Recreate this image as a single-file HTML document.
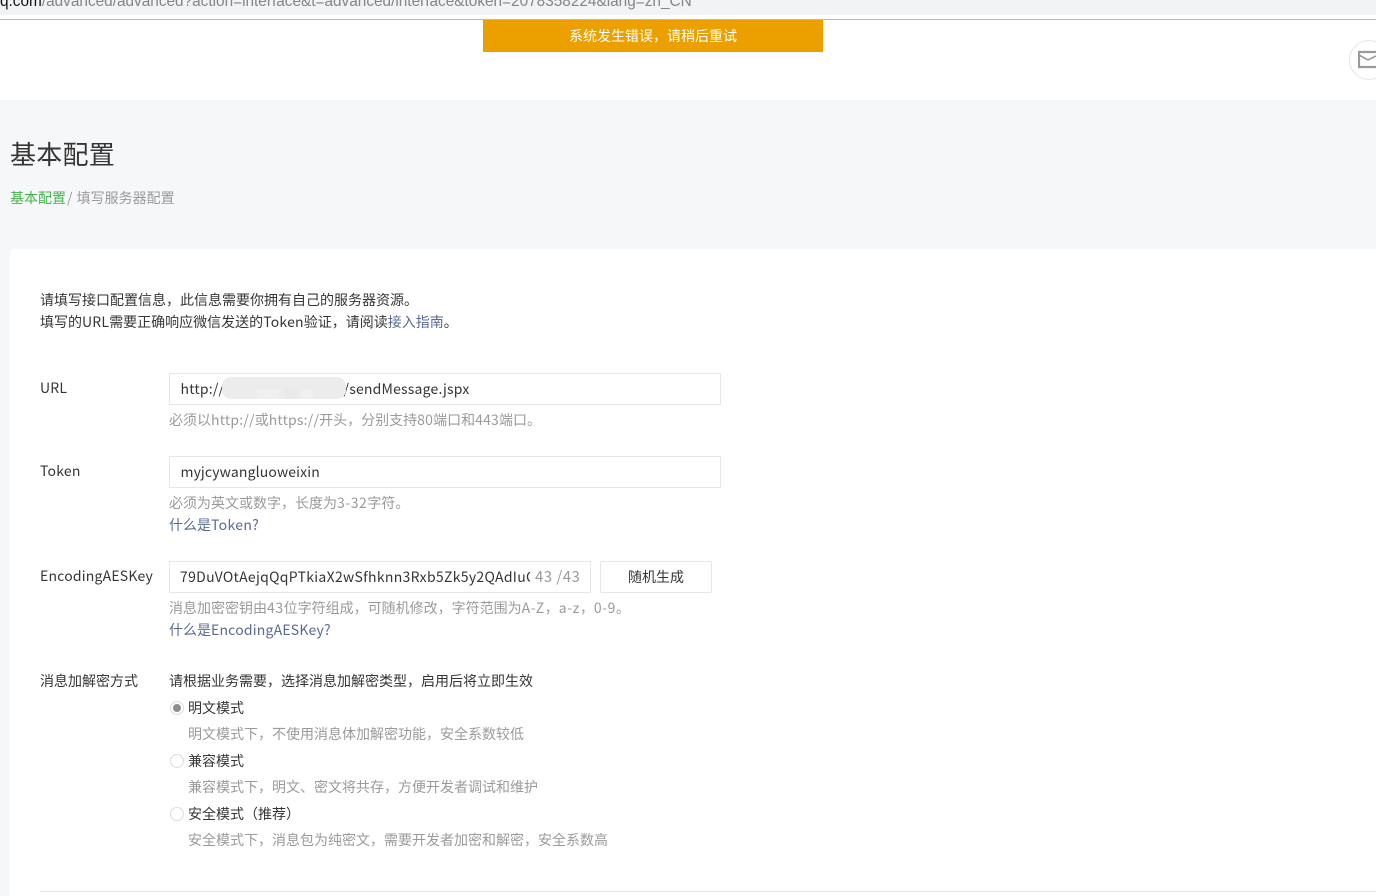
<!DOCTYPE html>
<html lang="zh-CN">
<head>
<meta charset="utf-8">
<title>基本配置</title>
<style>
html,body{margin:0;padding:0;width:1376px;height:896px;overflow:hidden;background:#f6f7f9;}
body{position:relative;font-family:"Noto Sans CJK SC","Liberation Sans",sans-serif;font-size:14px;color:#353535;}
.t{position:absolute;white-space:nowrap;line-height:22px;height:22px;}
.b{position:absolute;box-sizing:border-box;}
.g{color:#9a9a9a;}
.l{color:#576b95;}
.a{letter-spacing:.2px;}
.d{letter-spacing:.55px;}
.in{position:absolute;box-sizing:border-box;background:#fff;border:1px solid #e7e7eb;height:32px;}
.r{position:absolute;box-sizing:border-box;width:14px;height:14px;border-radius:50%;border:1px solid #dcdcdc;background:#fff;left:170px;}
</style>
</head>
<body>
<div class="b" style="left:0;top:0;width:1376px;height:15px;background:#f1f3f5;"></div>
<div class="b" style="left:0;top:15px;width:1376px;height:4px;background:#fff;"></div>
<div class="b" style="left:0;top:19px;width:1376px;height:1px;background:#b8b8b8;"></div>
<div class="t" style="left:0;top:-9px;font-size:15.37px;color:#80868c;font-family:'Liberation Sans',sans-serif;"><span style="color:#111">q.com</span>/advanced/advanced?action=interface&amp;t=advanced/interface&amp;token=2078358224&amp;lang=zh_CN</div>

<div class="b" style="left:0;top:20px;width:1376px;height:80px;background:#fff;"></div>
<div class="b" style="left:483px;top:20px;width:340px;height:32px;background:#eba000;"></div>
<div class="t" style="left:569px;top:25px;color:#fff;">系统发生错误，请稍后重试</div>

<div class="b" style="left:1349px;top:40px;width:40px;height:40px;border-radius:50%;border:1px solid #e4e6e9;background:#fff;"></div>
<svg class="b" style="left:1358px;top:50px;" width="18" height="20" viewBox="0 0 18 20"><path d="M18 2H1v15h17" fill="none" stroke="#9a9a9a" stroke-width="2.2"/><path d="M1 5l9 5 8-4" fill="none" stroke="#9a9a9a" stroke-width="1.6"/></svg>

<div class="t" style="left:10px;top:135px;height:38px;line-height:38px;font-size:26px;letter-spacing:.25px;color:#353535;">基本配置</div>
<div class="t" style="left:10px;top:187px;"><span style="color:#44b549;">基本配置</span><span class="g" style="margin-left:1px;">/<span style="margin-left:1px;"> 填写服务器配置</span></span></div>

<div class="b" style="left:10px;top:249px;width:1366px;height:647px;background:#fff;border-radius:3px 0 0 0;"></div>

<div class="t" style="left:40px;top:289px;">请填写接口配置信息，此信息需要你拥有自己的服务器资源。</div>
<div class="t" style="left:40px;top:311px;">填写的<span class="a">URL</span>需要正确响应微信发送的<span class="a">Token</span>验证，请阅读<span class="l">接入指南</span>。</div>

<div class="t a" style="left:40px;top:377px;">URL</div>
<div class="in" style="left:169px;top:373px;width:552px;"></div>
<div class="t a" style="left:180.5px;top:378px;">http://</div>
<div class="t a" style="left:343.5px;top:378px;">/sendMessage.jspx</div>
<div class="b" style="left:222px;top:377px;width:124px;height:22px;border-radius:9px;background:#ececed;"></div>
<div class="b" style="left:257px;top:390px;width:22px;height:9px;background:#eff0f0;"></div>
<div class="b" style="left:285px;top:388px;width:13px;height:11px;background:#e8e9e9;"></div>
<div class="b" style="left:301px;top:390px;width:12px;height:9px;background:#eff0f0;"></div>
<div class="t g" style="left:169px;top:409px;">必须以<span class="a">http://</span>或<span class="a">https://</span>开头，分别支持<span class="a">80</span>端口和<span class="a">443</span>端口。</div>

<div class="t a" style="left:40px;top:460px;">Token</div>
<div class="in" style="left:169px;top:456px;width:552px;"></div>
<div class="t" style="left:180.5px;top:461px;letter-spacing:.14px;">myjcywangluoweixin</div>
<div class="t g" style="left:169px;top:492px;">必须为英文或数字，长度为<span class="d">3-32</span>字符。</div>
<div class="t l" style="left:169px;top:514px;">什么是<span class="a" style="letter-spacing:.33px;">Token?</span></div>

<div class="t a" style="left:40px;top:565px;">EncodingAESKey</div>
<div class="in" style="left:169px;top:561px;width:422px;"></div>
<div class="t" style="left:180px;top:566px;width:350px;overflow:hidden;letter-spacing:.3px;">79DuVOtAejqQqPTkiaX2wSfhknn3Rxb5Zk5y2QAdIuG</div>
<div class="t g" style="left:535px;top:566px;font-size:15px;letter-spacing:.45px;">43 /43</div>
<div class="b" style="left:600px;top:561px;width:112px;height:32px;border:1px solid #e7e7eb;border-radius:2px;background:#fff;"></div>
<div class="t" style="left:628px;top:566px;">随机生成</div>
<div class="t g" style="left:169px;top:597px;">消息加密密钥由<span class="d">43</span>位字符组成，可随机修改，字符范围为<span class="d">A-Z</span>，<span class="d">a-z</span>，<span class="d">0-9</span>。</div>
<div class="t l" style="left:169px;top:619px;">什么是<span class="a">EncodingAESKey?</span></div>

<div class="t" style="left:40px;top:670px;">消息加解密方式</div>
<div class="t" style="left:169px;top:670px;">请根据业务需要，选择消息加解密类型，启用后将立即生效</div>

<div class="r" style="top:701px;"></div>
<div class="b" style="left:173px;top:704px;width:8px;height:8px;border-radius:50%;background:#8d8d8d;"></div>
<div class="t" style="left:188px;top:697px;">明文模式</div>
<div class="t g" style="left:188px;top:723px;">明文模式下，不使用消息体加解密功能，安全系数较低</div>

<div class="r" style="top:754px;"></div>
<div class="t" style="left:188px;top:750px;">兼容模式</div>
<div class="t g" style="left:188px;top:776px;">兼容模式下，明文、密文将共存，方便开发者调试和维护</div>

<div class="r" style="top:807px;"></div>
<div class="t" style="left:188px;top:803px;">安全模式（推荐）</div>
<div class="t g" style="left:188px;top:829px;">安全模式下，消息包为纯密文，需要开发者加密和解密，安全系数高</div>

<div class="b" style="left:40px;top:891px;width:1336px;height:1px;background:#e7e7eb;"></div>
</body>
</html>
